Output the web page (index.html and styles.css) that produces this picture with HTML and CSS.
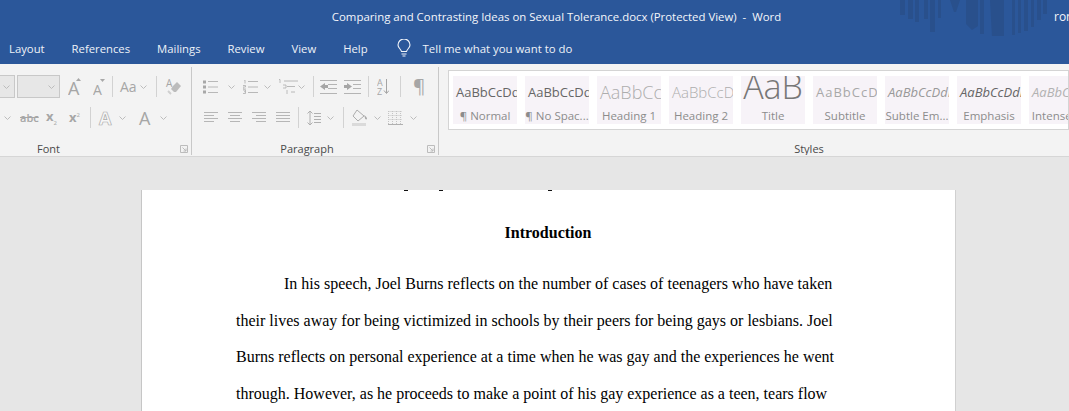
FILE: index.html
```html
<!DOCTYPE html>
<html lang="en">
<head>
    <meta charset="UTF-8">
    <title>Comparing and Contrasting Ideas on Sexual Tolerance.docx (Protected View) - Word</title>
    <link rel="stylesheet" href="styles.css">
</head>
<body>
    <svg class="sprite" aria-hidden="true">
        <symbol id="chev" viewBox="0 0 7 4"><path d="M.5.5 3.5 3.5 6.5.5" fill="none" stroke="#bcbcbc"/></symbol>
        <symbol id="launcher" viewBox="0 0 8 8"><path d="M.5 7.5V.5H7.5V7.5ZM2.5 2.5 6 6M6 3.500V6H3.500" fill="none" stroke="#bcbcbc"/></symbol>
    </svg>

    <div class="app">
        <header class="titlebar">
            <svg class="pattern" width="150" height="36" viewBox="0 0 150 36">
                <path d="M0 0h5v15H0ZM8 0h5v19H8ZM15 0h4v22h-4ZM24 0h4v19h-4ZM30 0h5v32h-5ZM38 0h3v18h-3ZM50 0h10l-4 12h-2ZM66 0h12v26l-6 4-6-6ZM80 0h4v34h-4ZM90 0h14v37H92ZM112 0h3v35h-3ZM118 0h3v33h-3ZM124 0h4v31h-4ZM131 0h3v27h-3ZM137 0h4v20h-4ZM143 0h4v14h-4Z" fill="#29508c"/>
            </svg>
            <div class="doc-title">Comparing and Contrasting Ideas on Sexual Tolerance.docx (Protected View)&nbsp; -&nbsp; Word</div>
            <div class="account">ron</div>
        </header>

        <nav class="tabs">
            <span>Layout</span>
            <span>References</span>
            <span>Mailings</span>
            <span>Review</span>
            <span>View</span>
            <span>Help</span>
            <svg class="bulb" width="14" height="18" viewBox="0 0 14 18"><path d="M4.5 12.5C4 10 1 9 1 6a6 6 0 0 1 12 0c0 3-3 4-3.500 6.500ZM4.500 15h5M5.500 17h3" fill="none" stroke="#f1f4f9" stroke-width="1.100"/></svg>
            <span class="tell">Tell me what you want to do</span>
        </nav>

        <section class="ribbon">
            <div class="group group-font">
                <div class="tool-row">
                    <div class="combo combo-a"><svg class="chev"><use href="#chev"/></svg></div>
                    <div class="combo combo-b ml2"><svg class="chev"><use href="#chev"/></svg></div>
                    <svg class="ml8" width="14" height="18" viewBox="0 0 14 18"><text x="0" y="17" class="ico-a big">A</text><path d="M8 3 10.500 0 13 3Z" fill="#a8a8a8"/></svg>
                    <svg class="ml11" width="12" height="18" viewBox="0 0 12 18"><text x="0" y="17" class="ico-a mid">A</text><path d="M7 1h5L9.500 4Z" fill="#a8a8a8"/></svg>
                    <i class="sep ml7"></i>
                    <span class="ico-text aa ml7">Aa</span>
                    <svg class="chev-s ml4"><use href="#chev"/></svg>
                    <i class="sep ml9"></i>
                    <svg class="ml8" width="16" height="17" viewBox="0 0 16 17"><text x="1" y="9" class="ico-a tiny">A</text><path d="M8 8 12 4 16 8 11 14H9L6 11Z" fill="#bcbcbc"/><path d="M3 13 6 16" stroke="#cfcfcf" stroke-width="2"/></svg>
                </div>
                <div class="tool-row">
                    <svg class="chev-s ml4"><use href="#chev"/></svg>
                    <span class="ico-text abc ml9">abc</span>
                    <span class="ico-text script ml10">x<sub>2</sub></span>
                    <span class="ico-text script ml11">x<sup>2</sup></span>
                    <i class="sep ml9"></i>
                    <span class="ico-text outline ml8">A</span>
                    <svg class="chev-s ml7"><use href="#chev"/></svg>
                    <span class="ico-text plain ml13">A</span>
                    <svg class="chev-s ml8"><use href="#chev"/></svg>
                </div>
                <div class="group-label">Font</div>
                <svg class="launcher"><use href="#launcher"/></svg>
            </div>

            <div class="group group-para">
                <div class="tool-row">
                    <svg class="ml11" width="15" height="14" viewBox="0 0 15 14"><path d="M5 1.500h10M5 7h10M5 12.500h10" stroke="#b8b8b8"/><path d="M0 .5h3v3H0ZM0 5.500h3v3H0ZM0 10.500h3v3H0Z" fill="#a8a8a8"/></svg>
                    <svg class="chev-s ml10"><use href="#chev"/></svg>
                    <svg class="ml8" width="15" height="14" viewBox="0 0 15 14"><path d="M5 1.500h10M5 7h10M5 12.500h10" stroke="#b8b8b8"/><path d="M1 0h1v3.500M0 5.500h2.500V7H0v2h3M0 10h2.500v3.500H0M1 11.700h1.500" fill="none" stroke="#adadad" stroke-width=".8"/></svg>
                    <svg class="chev-s ml6"><use href="#chev"/></svg>
                    <svg class="ml7" width="20" height="16" viewBox="0 0 20 16"><path d="M6 2h14M9 7.500h8M13 13h4" stroke="#b8b8b8"/><path d="M1 .5h1v3.500M5 6h3v3H5M9 11v4" fill="none" stroke="#adadad" stroke-width=".8"/></svg>
                    <svg class="chev-s"><use href="#chev"/></svg>
                    <i class="sep ml8"></i>
                    <svg class="ml6" width="17" height="14" viewBox="0 0 17 14"><path d="M0 .500h17M8 4.500h9M8 8.500h9M0 13.500h17" stroke="#b4b4b4"/><path d="M0 6.500 5 3V5h3V8H5v2Z" fill="#a6a6a6"/></svg>
                    <svg class="ml7" width="17" height="14" viewBox="0 0 17 14"><path d="M0 .500h17M9 4.500h8M9 8.500h8M0 13.500h17" stroke="#b4b4b4"/><path d="M8 6.500 3 3V5H0V8H3v2Z" fill="#a6a6a6"/></svg>
                    <i class="sep ml7"></i>
                    <svg class="ml8" width="12" height="17" viewBox="0 0 12 17"><text x="0" y="7.500" class="ico-a sort">A</text><text x="0" y="16.500" class="ico-a sort">Z</text><path d="M9.500 1v14M7 12.500l2.500 3 2.500-3" fill="none" stroke="#a4a4a4"/></svg>
                    <i class="sep ml11"></i>
                    <span class="ico-text pilcrow ml12">¶</span>
                </div>
                <div class="tool-row">
                    <svg class="ml12" width="14" height="11" viewBox="0 0 14 11"><path d="M0 .500h14M0 3.500h10M0 6.500h14M0 9.500h10" stroke="#b6b6b6"/></svg>
                    <svg class="ml10" width="14" height="11" viewBox="0 0 14 11"><path d="M0 .500h14M2 3.500h10M0 6.500h14M2 9.500h10" stroke="#b6b6b6"/></svg>
                    <svg class="ml10" width="14" height="11" viewBox="0 0 14 11"><path d="M0 .500h14M4 3.500h10M0 6.500h14M4 9.500h10" stroke="#b6b6b6"/></svg>
                    <svg class="ml10" width="14" height="11" viewBox="0 0 14 11"><path d="M0 .500h14M0 3.500h14M0 6.500h14M0 9.500h14" stroke="#b6b6b6"/></svg>
                    <i class="sep ml8"></i>
                    <svg class="ml8" width="14" height="16" viewBox="0 0 14 16"><path d="M3 1v14M.5 3.500 3 1l2.500 2.500M.5 12.500 3 15l2.500-2.500M7 3.500h7M7 6.500h7M7 9.500h7M7 12.500h7" fill="none" stroke="#b0b0b0"/></svg>
                    <svg class="chev-s ml6"><use href="#chev"/></svg>
                    <i class="sep ml9"></i>
                    <svg class="ml8" width="16" height="17" viewBox="0 0 16 17"><path d="M5 1 1 7l5 5 6-5Z" fill="#f3f3f3" stroke="#adadad"/><path d="M12 6c2 1 3 3 3 4-1 1-2 0-2-1Z" fill="#a8a8a8"/><path d="M0 14h14v3H0Z" fill="#dadada"/></svg>
                    <svg class="chev-s ml6"><use href="#chev"/></svg>
                    <svg class="ml7" width="15" height="14" viewBox="0 0 15 14"><path d="M.5.500h14M.5 4.500h14M.5 8.500h14M.5 0v13M4.500 0v13M8.500 0v13M12.500 0v13" stroke="#c4c4c4" stroke-dasharray="1 1"/><path d="M0 13.500h15" stroke="#b0b0b0"/></svg>
                    <svg class="chev-s ml7"><use href="#chev"/></svg>
                </div>
                <div class="group-label">Paragraph</div>
                <svg class="launcher"><use href="#launcher"/></svg>
            </div>

            <div class="group group-styles">
                <div class="gallery">
                    <div class="tile"><div class="sample">AaBbCcDdEe</div><div class="name">¶ Normal</div></div>
                    <div class="tile"><div class="sample">AaBbCcDdEe</div><div class="name">¶ No Spac...</div></div>
                    <div class="tile"><div class="sample heading1">AaBbCcDd</div><div class="name">Heading 1</div></div>
                    <div class="tile"><div class="sample heading2">AaBbCcDdE</div><div class="name">Heading 2</div></div>
                    <div class="tile"><div class="sample title">AaB</div><div class="name">Title</div></div>
                    <div class="tile"><div class="sample subtitle">AaBbCcDdE</div><div class="name">Subtitle</div></div>
                    <div class="tile"><div class="sample subtle">AaBbCcDdEe</div><div class="name">Subtle Em...</div></div>
                    <div class="tile"><div class="sample emphasis">AaBbCcDdEe</div><div class="name">Emphasis</div></div>
                    <div class="tile"><div class="sample intense">AaBbCcDdEe</div><div class="name">Intense E...</div></div>
                </div>
                <div class="group-label">Styles</div>
            </div>
        </section>

        <main class="workspace">
            <article class="page">
                <div class="cut-line"><i></i><i></i><i></i></div>
                <h2>Introduction</h2>
                <p class="indent">In his speech, Joel Burns reflects on the number of cases of teenagers who have taken</p>
                <p>their lives away for being victimized in schools by their peers for being gays or lesbians. Joel</p>
                <p>Burns reflects on personal experience at a time when he was gay and the experiences he went</p>
                <p>through. However, as he proceeds to make a point of his gay experience as a teen, tears flow</p>
            </article>
        </main>
    </div>
</body>
</html>
```

FILE: styles.css
```css
* {
    margin: 0;
    padding: 0;
    box-sizing: border-box;
}

body {
    font-family: 'Open Sans', sans-serif;
    background-color: #e6e6e6;
    overflow: hidden;
}

.sprite {
    display: none;
}

.app {
    height: 411px;
    display: flex;
    flex-direction: column;
    overflow: hidden;
}

/* title bar */
.titlebar {
    position: relative;
    height: 32px;
    background-color: #2b579a;
    color: #f4f6fa;
    display: flex;
    justify-content: center;
    align-items: center;
    font-size: 11.400px;
}

.pattern {
    position: absolute;
    top: 0;
    left: 900px;
}

.doc-title {
    position: relative;
    white-space: nowrap;
    left: 22px;
}

.account {
    position: absolute;
    left: 1054px;
    top: 8px;
    font-size: 12px;
}

/* tabs */
.tabs {
    height: 32px;
    background-color: #2b579a;
    color: #eef2f8;
    display: flex;
    align-items: center;
    gap: 27px;
    padding-left: 9px;
    font-size: 11.300px;
}

.bulb {
    margin-left: 2px;
}

.tell {
    margin-left: -15px;
    font-size: 11.400px;
}

/* ribbon */
.ribbon {
    height: 93px;
    background-color: #f3f3f3;
    border-bottom: 1px solid #d6d6d6;
    display: flex;
}

.group {
    position: relative;
    height: 88px;
    margin-top: 3px;
    padding-top: 8px;
    flex-shrink: 0;
}

.group-font {
    width: 192px;
    border-right: 1px solid #c8c8c8;
}

.group-para {
    width: 247px;
    border-right: 1px solid #c8c8c8;
}

.group-styles {
    width: 630px;
    padding-top: 3px;
    padding-left: 9px;
    overflow: hidden;
}

.tool-row {
    display: flex;
    align-items: center;
    height: 23px;
    margin-bottom: 8px;
}

.tool-row svg {
    flex-shrink: 0;
}

.group-label {
    position: absolute;
    top: 74px;
    left: 0;
    right: 0;
    text-align: center;
    font-size: 11px;
    line-height: 15px;
    color: #4a4a4a;
}

.group-font .group-label {
    left: 2px;
    right: 96px;
}

.group-para .group-label {
    right: 16px;
}

.group-styles .group-label {
    right: auto;
    width: 740px;
}

.launcher {
    position: absolute;
    right: 3px;
    top: 78px;
    width: 8px;
    height: 8px;
}

.combo {
    height: 23px;
    background-color: #e7e7e7;
    border: 1px solid #c8c8c8;
    display: flex;
    align-items: center;
    justify-content: flex-end;
    padding-right: 4px;
}

.combo-a {
    width: 15px;
    border-left: none;
}

.combo-b {
    width: 43px;
}

.chev,
.chev-s {
    width: 7px;
    height: 4px;
}

.sep {
    display: block;
    width: 1px;
    height: 21px;
    background-color: #d2d2d2;
    flex-shrink: 0;
}

.ml2 { margin-left: 2px; }
.ml4 { margin-left: 4px; }
.ml5 { margin-left: 5px; }
.ml6 { margin-left: 6px; }
.ml7 { margin-left: 7px; }
.ml8 { margin-left: 8px; }
.ml9 { margin-left: 9px; }
.ml10 { margin-left: 10px; }
.ml11 { margin-left: 11px; }
.ml12 { margin-left: 12px; }
.ml13 { margin-left: 13px; }

.ico-a {
    fill: #a6a6a6;
    font-family: 'Open Sans', sans-serif;
}

.ico-a.big { font-size: 18px; }
.ico-a.mid { font-size: 14px; }
.ico-a.tiny { font-size: 10px; }
.ico-a.sort { font-size: 9px; }

.ico-text {
    color: #a6a6a6;
    line-height: 1;
    white-space: nowrap;
}

.aa {
    font-size: 14px;
    width: 16px;
}

.abc {
    font-size: 11px;
    font-weight: 600;
    width: 16px;
    text-decoration: line-through;
}

.script {
    font-size: 13px;
    font-weight: 700;
    width: 12px;
}

.script sub,
.script sup {
    font-size: 6px;
    font-weight: 400;
}

.outline {
    font-size: 18px;
    font-weight: 700;
    width: 13px;
    color: #f7f7f7;
    -webkit-text-stroke: 0.700px #acacac;
}

.plain {
    font-size: 18px;
    width: 13px;
}

.pilcrow {
    font-size: 19px;
}

/* style gallery */
.gallery {
    height: 60px;
    background-color: #fff;
    border: 1px solid #d4d4d4;
    display: flex;
    gap: 8px;
    padding: 5px 0 0 4px;
    overflow: hidden;
}

.tile {
    width: 64px;
    height: 48px;
    background-color: #f7f3f8;
    flex-shrink: 0;
    text-align: center;
    overflow: hidden;
}

.sample {
    height: 32px;
    line-height: 32px;
    font-size: 13px;
    color: #666;
    white-space: nowrap;
    overflow: hidden;
    text-align: left;
    padding-left: 3px;
}

.heading1 {
    font-size: 18px;
    font-weight: 300;
    color: #adadad;
}

.heading2 {
    font-size: 15px;
    font-weight: 300;
    color: #adadad;
}

.title {
    font-size: 34px;
    font-weight: 300;
    line-height: 20px;
    color: #777;
    text-align: center;
    padding-left: 0;
}

.subtitle {
    letter-spacing: 1px;
    color: #a8a8a8;
}

.subtle {
    font-style: italic;
    color: #999;
}

.emphasis {
    font-style: italic;
    color: #666;
}

.intense {
    font-style: italic;
    color: #b2b2b2;
}

.name {
    font-size: 11.500px;
    line-height: 16px;
    color: #8c8c8c;
    white-space: nowrap;
    overflow: hidden;
}

/* document */
.workspace {
    flex: 1;
    padding: 33px 0 0 141px;
    overflow: hidden;
}

.page {
    width: 815px;
    height: 400px;
    background-color: #fff;
    border-left: 1px solid #c6c6c6;
    border-right: 1px solid #d0d0d0;
    padding: 0 0 0 94px;
    font-family: 'Liberation Serif', serif;
    font-size: 16px;
    color: #000;
}

.cut-line {
    display: flex;
    gap: 31px;
    height: 2px;
    margin-left: 168px;
}

.cut-line i {
    display: block;
    width: 4px;
    height: 1px;
    background-color: #111;
}

.cut-line i:last-child {
    margin-left: 74px;
}

h2 {
    font-size: 16px;
    line-height: 20px;
    margin-top: 31px;
    margin-left: 94px;
    width: 436px;
    margin-bottom: 23px;
    text-align: center;
}

p {
    line-height: 36.700px;
    white-space: nowrap;
}

.indent {
    padding-left: 48px;
}
```
